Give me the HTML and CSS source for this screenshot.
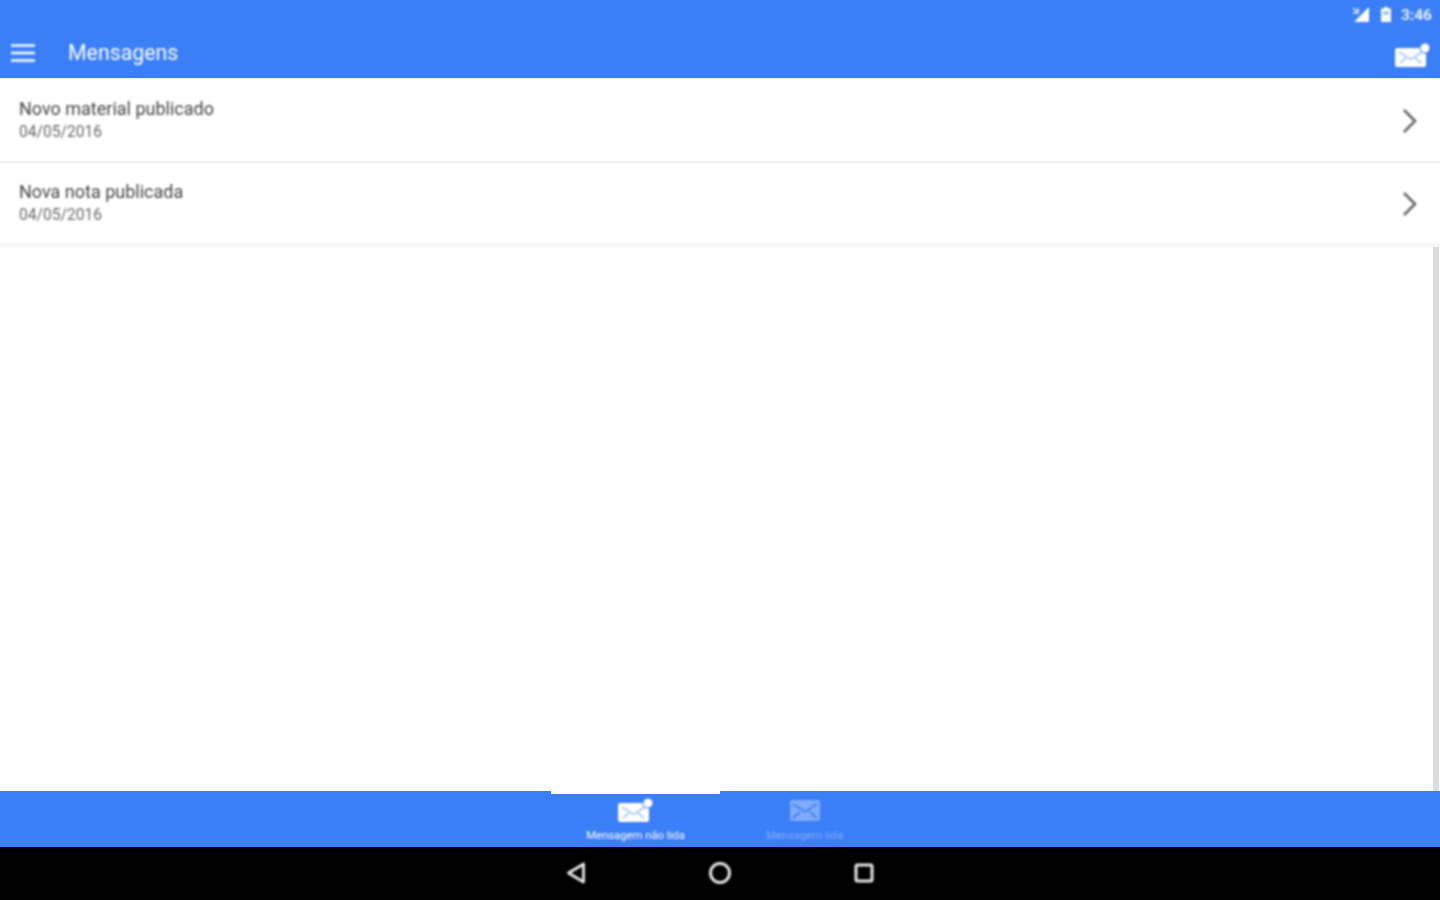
FILE: index.html
```html
<!DOCTYPE html>
<html lang="pt-BR">
<head>
    <meta charset="UTF-8">
    <title>Mensagens</title>
    <link rel="stylesheet" href="styles.css">
</head>
<body>
    <div class="app">
        <header class="app-header">
            <div class="status-bar">
                <!-- signal -->
                <svg class="status-icon" width="20" height="18" viewBox="0 0 20 18">
                    <path d="M18 1v15H3z" fill="#fff"/>
                    <path d="M1 1h8v7H1z" fill="#3a7ef8"/>
                    <path d="M2 2l5 5M7 2v5H2" stroke="#dbe7fe" stroke-width="1.6" fill="none"/>
                </svg>
                <!-- battery -->
                <svg class="status-icon" width="12" height="18" viewBox="0 0 12 18">
                    <path d="M4 1h4v1.5h3V16H1V2.5h3z" fill="#fff"/>
                    <path d="M3 5h6v4H3z" fill="#a9c8fc"/>
                </svg>
                <span class="status-time">3:46</span>
            </div>
            <div class="toolbar">
                <svg class="menu-icon" width="24" height="18" viewBox="0 0 24 18">
                    <path d="M0 1.5h24M0 9h24M0 16.500h24" stroke="#fff" stroke-width="2.400"/>
                </svg>
                <h1 class="toolbar-title">Mensagens</h1>
                <svg class="mail-icon" width="36" height="26" viewBox="0 0 36 26">
                    <path d="M2 6h27a2 2 0 0 1 2 2v15a2 2 0 0 1-2 2H2a2 2 0 0 1-2-2V8a2 2 0 0 1 2-2z" fill="#fff"/>
                    <path d="M4 10l11.500 7.500L27 10M5 21l6-5M26 21l-6-5" stroke="#a9c8fc" stroke-width="1.800" fill="none"/>
                    <circle cx="30" cy="6" r="5.500" fill="#3a7ef8"/>
                    <circle cx="30" cy="6" r="4.500" fill="#fff"/>
                </svg>
            </div>
        </header>

        <main class="content">
            <ul class="message-list">
                <li class="message-item">
                    <div class="message-info">
                        <div class="message-title">Novo material publicado</div>
                        <div class="message-date">04/05/2016</div>
                    </div>
                    <svg class="chevron" width="16" height="26" viewBox="0 0 16 26">
                        <path d="M2 2l11 11L2 24" stroke="#666" stroke-width="2.600" fill="none"/>
                    </svg>
                </li>
                <li class="message-item">
                    <div class="message-info">
                        <div class="message-title">Nova nota publicada</div>
                        <div class="message-date">04/05/2016</div>
                    </div>
                    <svg class="chevron" width="16" height="26" viewBox="0 0 16 26">
                        <path d="M2 2l11 11L2 24" stroke="#666" stroke-width="2.600" fill="none"/>
                    </svg>
                </li>
            </ul>
            <div class="scrollbar"></div>
        </main>

        <nav class="tab-bar">
            <div class="tab tab-active">
                <svg width="36" height="26" viewBox="0 0 36 26">
                    <path d="M2 6h27a2 2 0 0 1 2 2v15a2 2 0 0 1-2 2H2a2 2 0 0 1-2-2V8a2 2 0 0 1 2-2z" fill="#fff"/>
                    <path d="M4 10l11.500 7.500L27 10M5 21l6-5M26 21l-6-5" stroke="#a9c8fc" stroke-width="1.800" fill="none"/>
                    <circle cx="30" cy="6" r="5.500" fill="#3a7ef8"/>
                    <circle cx="30" cy="6" r="4.500" fill="#fff"/>
                </svg>
                <span class="tab-label">Mensagem não lida</span>
            </div>
            <div class="tab tab-muted">
                <svg width="30" height="21" viewBox="0 0 30 21">
                    <rect width="30" height="21" rx="2" fill="#fff"/>
                    <path d="M3 4l12 8 12-8M3 18l7-6M27 18l-7-6" stroke="#3a7ef8" stroke-width="1.800" fill="none"/>
                </svg>
                <span class="tab-label">Mensagem lida</span>
            </div>
        </nav>

        <footer class="nav-bar">
            <svg width="20" height="22" viewBox="0 0 20 22">
                <path d="M17.500 2v18L2.500 11z" stroke="#e8e8e8" stroke-width="2.800" fill="none" stroke-linejoin="round"/>
            </svg>
            <svg width="24" height="24" viewBox="0 0 24 24">
                <circle cx="12" cy="12" r="9.500" stroke="#e8e8e8" stroke-width="3" fill="none"/>
            </svg>
            <svg width="20" height="20" viewBox="0 0 20 20">
                <rect x="2" y="2" width="16" height="16" rx="1.500" stroke="#e8e8e8" stroke-width="3" fill="none"/>
            </svg>
        </footer>
    </div>
</body>
</html>
```

FILE: styles.css
```css
* {
    box-sizing: border-box;
    margin: 0;
    padding: 0;
}

body {
    font-family: Roboto, 'Liberation Sans', sans-serif;
    background: #fff;
    height: 900px;
    overflow: hidden;
}

.app {
    display: flex;
    flex-direction: column;
    height: 900px;
}

/* the reference is an upscaled capture, text and icons are a bit soft */
.status-bar,
.toolbar,
.message-info,
.chevron,
.tab svg,
.tab-label,
.nav-bar svg {
    filter: blur(0.8px);
}

.app-header {
    height: 79px;
    background: #3a7ef8;
    color: #fff;
    border-bottom: 1px solid #e3edfd;
    flex-shrink: 0;
}

.status-bar {
    height: 30px;
    display: flex;
    align-items: center;
    justify-content: flex-end;
    gap: 8px;
    padding-right: 8px;
}

.status-icon {
    margin-right: 1px;
}

.status-time {
    font-size: 15.5px;
    font-weight: 700;
    color: #e6efff;
}

.toolbar {
    height: 48px;
    display: flex;
    align-items: center;
    padding: 0 9px 0 11px;
}

.menu-icon {
    margin-right: 33px;
    margin-top: -2px;
}

.toolbar-title {
    flex: 1;
    font-size: 21.3px;
    font-weight: 400;
    margin-top: -4px;
}

.mail-icon {
    margin-top: 1px;
}

.content {
    flex: 1;
    position: relative;
    background: #fff;
}

.message-list {
    list-style: none;
}

.message-item {
    height: 84px;
    display: flex;
    align-items: center;
    justify-content: space-between;
    padding: 0 22px 0 19px;
    border-bottom: 2px solid #f0f0f0;
}

.message-item + .message-item {
    border-bottom: 4px solid #f7f7f7;
}

.message-info {
    margin-top: -2px;
}

.message-title {
    font-size: 18px;
    color: #444;
    line-height: 22px;
    margin-bottom: 3px;
}

.message-date {
    font-size: 15.600px;
    color: #666;
    line-height: 18px;
}

.chevron {
    margin-top: 2px;
}

.message-item + .message-item .chevron {
    margin-top: 1px;
}

.scrollbar {
    position: absolute;
    top: 168px;
    right: 1px;
    bottom: 0;
    width: 6px;
    background: #dcdcdc;
}

.tab-bar {
    height: 56px;
    background: #3a7ef8;
    display: flex;
    justify-content: center;
    flex-shrink: 0;
}

.tab {
    width: 169px;
    display: flex;
    flex-direction: column;
    align-items: center;
    color: #fff;
}

.tab-active {
    border-top: 3px solid #fff;
    padding-top: 3px;
}

.tab-muted {
    padding-top: 9px;
    opacity: 0.35;
}

.tab-label {
    font-size: 11.3px;
    line-height: 14px;
    margin-top: 6px;
}

.tab-muted .tab-label {
    margin-top: 8px;
}

.nav-bar {
    height: 53px;
    background: #000;
    display: flex;
    align-items: center;
    justify-content: center;
    gap: 122px;
    padding-bottom: 2px;
    flex-shrink: 0;
}
```
